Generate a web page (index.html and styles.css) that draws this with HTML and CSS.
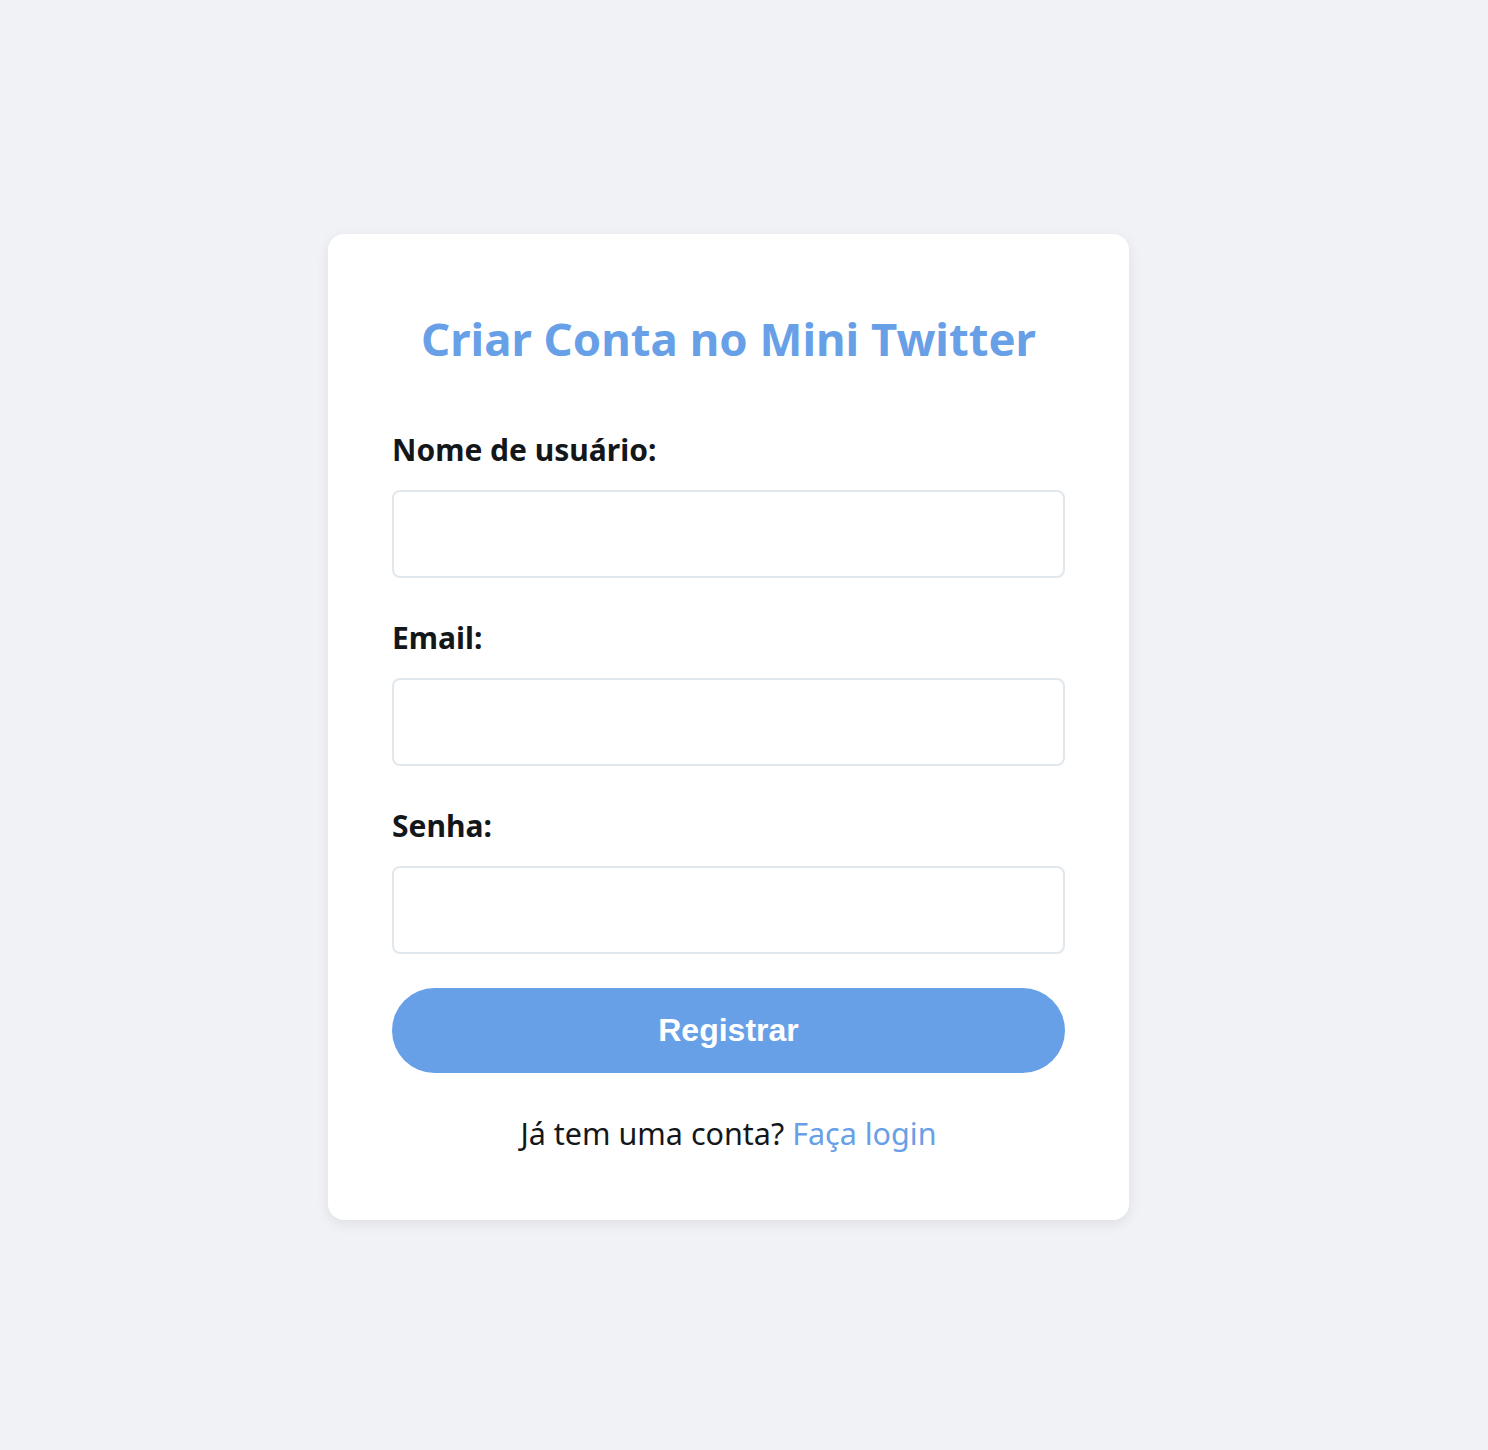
FILE: index.html
```html
<!DOCTYPE html>
<html lang="pt-BR">
<head>
<meta charset="utf-8">
<title>Criar Conta - Mini Twitter</title>
<link rel="stylesheet" href="styles.css">
</head>
<body>
<main class="page">
  <section class="card">
    <h1 class="title">Criar Conta no Mini Twitter</h1>
    <form class="form">
      <div class="field">
        <label class="label" for="username">Nome de usuário:</label>
        <input class="input" id="username" type="text">
      </div>
      <div class="field">
        <label class="label" for="email">Email:</label>
        <input class="input" id="email" type="email">
      </div>
      <div class="field field-last">
        <label class="label" for="password">Senha:</label>
        <input class="input" id="password" type="password">
      </div>
      <button class="button" type="button">Registrar</button>
    </form>
    <p class="footer">Já tem uma conta? <a class="link" href="#">Faça login</a></p>
  </section>
</main>
</body>
</html>
```

FILE: styles.css
```css
html, body {
  margin: 0;
  padding: 0;
}

body {
  background: #f0f2f5;
  font-family: "Noto Sans", "Open Sans", sans-serif;
  color: #14171a;
}

.page {
  min-height: 1450px;
  display: flex;
  align-items: center;
  justify-content: center;
  padding: 4px 31px 0 0;
  box-sizing: border-box;
}

.card {
  width: 801px;
  box-sizing: border-box;
  background: #ffffff;
  border-radius: 16px;
  box-shadow: 0 4px 14px rgba(0, 0, 0, 0.08);
  padding: 72px 64px 67px;
}

.title {
  margin: 0 0 60px;
  text-align: center;
  font-size: 45.5px;
  line-height: 64px;
  font-weight: 700;
  color: #68a0e8;
}

.form {
  display: flex;
  flex-direction: column;
}

.field {
  display: flex;
  flex-direction: column;
  margin-bottom: 40px;
}

.field-last {
  margin-bottom: 34px;
}

.label {
  font-size: 30px;
  line-height: 40px;
  font-weight: 700;
  margin-bottom: 20px;
  color: #14171a;
}

.input {
  height: 88px;
  box-sizing: border-box;
  border: 2px solid #e1e8ed;
  border-radius: 8px;
  background: #fff;
  font-size: 28px;
  padding: 0 20px;
  outline: none;
}

.button {
  height: 85px;
  border: none;
  border-radius: 43px;
  background: #68a0e8;
  color: #ffffff;
  font-family: "Liberation Sans", Arial, sans-serif;
  font-weight: 700;
  font-size: 32px;
  cursor: pointer;
}

.footer {
  margin: 40px 0 0;
  text-align: center;
  font-size: 30.5px;
  line-height: 40px;
  color: #14171a;
}

.link {
  color: #68a0e8;
  text-decoration: none;
}
```
